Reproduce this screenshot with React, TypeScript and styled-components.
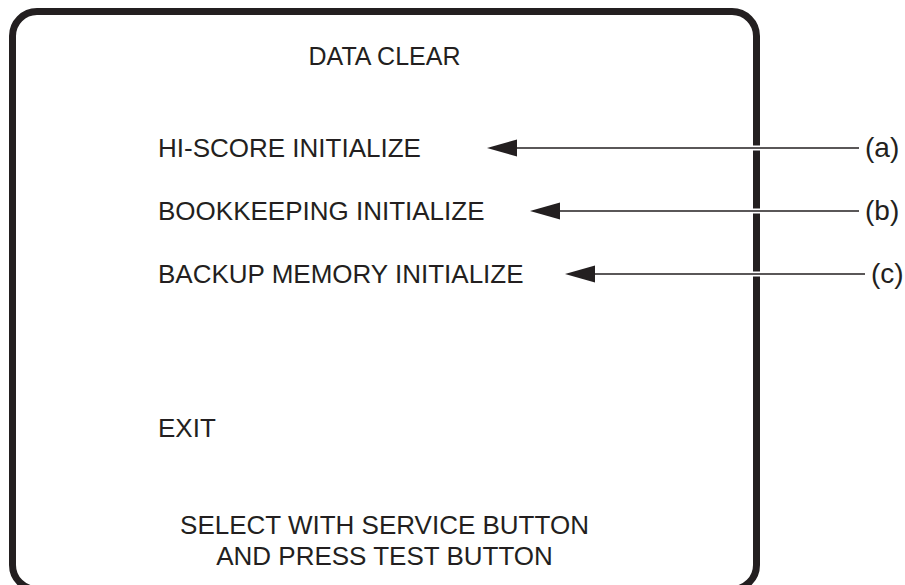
import React from "react";
import styled, { createGlobalStyle } from "styled-components";

const ink = "#231f20";

const GlobalStyle = createGlobalStyle`
  html, body {
    margin: 0;
    padding: 0;
    background: #fff;
    overflow: hidden;
  }
  body {
    font-family: "Liberation Sans", Arial, sans-serif;
    color: ${ink};
  }
`;

const Page = styled.div`
  width: 905px;
  height: 585px;
  overflow: hidden;
  padding: 8px 0 0 9px;
  box-sizing: border-box;
`;

/* the rounded screen outline, cut off by the bottom of the page */
const Screen = styled.div`
  width: 751px;
  height: 585px;
  box-sizing: border-box;
  border: 7px solid ${ink};
  border-radius: 28px;
  display: flex;
  flex-direction: column;
  padding-top: 26px;
`;

const Title = styled.div`
  font-size: 25px;
  line-height: 30px;
  text-align: center;
`;

const Menu = styled.div`
  display: flex;
  flex-direction: column;
  gap: 33px;
  margin-top: 62px;
  padding-left: 142px;
  margin-right: -152px;
`;

const Row = styled.div`
  display: flex;
  align-items: center;
  height: 30px;
`;

const ItemText = styled.span<{ $span?: number }>`
  font-size: 26px;
  line-height: 30px;
  white-space: nowrap;
  flex: 0 0 ${(p) => (p.$span ? `${p.$span}px` : "auto")};
`;

const Exit = styled(ItemText)`
  display: block;
  margin-top: 124px;
  padding-left: 142px;
`;

const Pointer = styled.svg`
  flex: 1 1 auto;
  height: 18px;
  overflow: visible;
`;

const Tag = styled.span`
  flex: 0 0 40px;
  margin-left: 6px;
  font-size: 28px;
  line-height: 30px;
`;

const Footer = styled.div`
  margin-top: 67px;
  font-size: 26px;
  line-height: 31px;
  text-align: center;
`;

const Arrow = () => (
  <Pointer>
    <line x1="20" y1="9" x2="100%" y2="9" stroke="#fff" strokeWidth="5" />
    <line x1="20" y1="9" x2="100%" y2="9" stroke={ink} strokeWidth="1.3" />
    <polygon points="0,9 30,0.5 30,17.5" fill={ink} />
  </Pointer>
);

const items = [
  { text: "HI-SCORE INITIALIZE", tip: 487, tag: "(a)" },
  { text: "BOOKKEEPING INITIALIZE", tip: 530, tag: "(b)" },
  { text: "BACKUP MEMORY INITIALIZE", tip: 565, tag: "(c)" },
];

export default function App() {
  return (
    <Page>
      <GlobalStyle />
      <Screen>
        <Title>DATA CLEAR</Title>
        <Menu>
          {items.map((it) => (
            <Row key={it.tag}>
              <ItemText $span={it.tip - 158}>{it.text}</ItemText>
              <Arrow />
              <Tag>{it.tag}</Tag>
            </Row>
          ))}
        </Menu>
        <Exit>EXIT</Exit>
        <Footer>
          SELECT WITH SERVICE BUTTON
          <br />
          AND PRESS TEST BUTTON
        </Footer>
      </Screen>
    </Page>
  );
}
